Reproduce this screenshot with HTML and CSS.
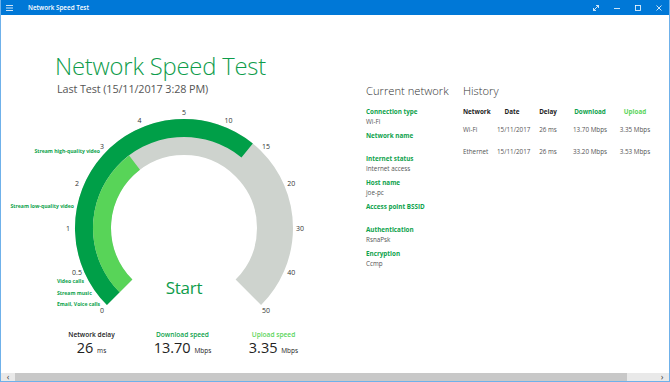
FILE: index.html
```html
<!DOCTYPE html>
<html lang="en">
<head>
    <meta charset="UTF-8">
    <title>Network Speed Test</title>
    <link rel="stylesheet" href="styles.css">
</head>
<body>
<div class="window">
    <header class="titlebar">
        <div class="title-left">
            <svg class="menu-icon" width="7" height="6" viewBox="0 0 7 6">
                <path d="M0 0.5H7M0 3H7M0 5.5H7" stroke="#cfe3f7" stroke-width="1"/>
            </svg>
            <span class="app-name">Network Speed Test</span>
        </div>
        <div class="title-buttons">
            <svg width="8" height="8" viewBox="0 0 8 8"><path d="M1.5 6.5L6.5 1.5M4 1.5H6.5V4M1.5 4V6.5H4" stroke="#fff" fill="none" stroke-width="0.8"/></svg>
            <svg width="8" height="8" viewBox="0 0 8 8"><path d="M1 4.5H7" stroke="#fff" stroke-width="0.8"/></svg>
            <svg width="8" height="8" viewBox="0 0 8 8"><rect x="1.5" y="1.5" width="5" height="5" stroke="#fff" fill="none" stroke-width="0.8"/></svg>
            <svg width="8" height="8" viewBox="0 0 8 8"><path d="M1.5 1.5L6.5 6.5M6.5 1.5L1.5 6.5" stroke="#fff" stroke-width="0.8"/></svg>
        </div>
    </header>

    <main class="content">
        <section class="test-panel">
            <h1>Network Speed Test</h1>
            <p class="last-test">Last Test (15/11/2017 3:28 PM)</p>

            <svg class="gauge" width="330" height="220" viewBox="0 0 330 220">
                <!-- track -->
                <path d="M118.65 192.35 A91 91 0 1 1 247.35 192.35" stroke="#ced3ce" stroke-width="36" fill="none"/>
                <!-- download 13.70 -->
                <path d="M112.29 198.71 A100 100 0 0 1 246.13 50.44" stroke="#009f48" stroke-width="18" fill="none"/>
                <!-- upload 3.35 -->
                <path d="M125.02 185.98 A82 82 0 0 1 133.54 62.60" stroke="#58d458" stroke-width="18" fill="none"/>

                <g class="scale">
                    <text x="101" y="210">0</text>
                    <text x="76" y="172.4">0.5</text>
                    <text x="67" y="128">1</text>
                    <text x="76" y="83.6">2</text>
                    <text x="101" y="46">3</text>
                    <text x="138.6" y="20.8">4</text>
                    <text x="183" y="12">5</text>
                    <text x="227.4" y="20.8">10</text>
                    <text x="265" y="46">15</text>
                    <text x="290.2" y="83.6">20</text>
                    <text x="299" y="128">30</text>
                    <text x="290.2" y="172.4">40</text>
                    <text x="265" y="210">50</text>
                </g>

                <g class="uses">
                    <text class="end" x="99" y="51">Stream high-quality video</text>
                    <text class="end" x="73" y="106">Stream low-quality video</text>
                    <text x="56" y="181">Video calls</text>
                    <text x="56" y="193">Stream music</text>
                    <text x="56" y="204">Email, Voice calls</text>
                </g>

                <text class="start" x="183" y="187">Start</text>
            </svg>

            <div class="stats">
                <div class="stat">
                    <div class="stat-label">Network delay</div>
                    <div class="stat-value">26 <small>ms</small></div>
                </div>
                <div class="stat">
                    <div class="stat-label download">Download speed</div>
                    <div class="stat-value">13.70 <small>Mbps</small></div>
                </div>
                <div class="stat">
                    <div class="stat-label upload">Upload speed</div>
                    <div class="stat-value">3.35 <small>Mbps</small></div>
                </div>
            </div>
        </section>

        <section class="network">
            <h2>Current network</h2>
            <dl>
                <dt>Connection type</dt><dd>Wi-Fi</dd>
                <dt>Network name</dt><dd></dd>
                <dt>Internet status</dt><dd>Internet access</dd>
                <dt>Host name</dt><dd>joe-pc</dd>
                <dt>Access point BSSID</dt><dd></dd>
                <dt>Authentication</dt><dd>RsnaPsk</dd>
                <dt>Encryption</dt><dd>Ccmp</dd>
            </dl>
        </section>

        <section class="history">
            <h2>History</h2>
            <div class="history-table">
                <div class="row head">
                    <span>Network</span><span>Date</span><span>Delay</span>
                    <span class="download">Download</span><span class="upload">Upload</span>
                </div>
                <div class="row">
                    <span>Wi-Fi</span><span>15/11/2017</span><span>26 ms</span>
                    <span>13.70 Mbps</span><span>3.35 Mbps</span>
                </div>
                <div class="row">
                    <span>Ethernet</span><span>15/11/2017</span><span>26 ms</span>
                    <span>33.20 Mbps</span><span>3.53 Mbps</span>
                </div>
            </div>
        </section>
    </main>

    <div class="hscroll">
        <span class="arrow">&#8249;</span>
        <div class="track"><div class="thumb"></div></div>
        <span class="arrow">&#8250;</span>
    </div>
</div>
</body>
</html>
```

FILE: styles.css
```css
* {
    margin: 0;
    padding: 0;
    box-sizing: border-box;
    font-family: "Open Sans", "Noto Sans", sans-serif;
}

body {
    background: #fff;
    color: #333;
}

.window {
    width: 670px;
    height: 382px;
    display: flex;
    flex-direction: column;
    border-left: 1px solid #6fb1ea;
    border-right: 1px solid #6fb1ea;
    border-bottom: 1px solid #6fb1ea;
    overflow: hidden;
}

.titlebar {
    height: 15px;
    background-color: #0078d7;
    color: white;
    display: flex;
    justify-content: space-between;
    align-items: center;
}

.title-left {
    display: flex;
    align-items: center;
}

.menu-icon {
    margin-left: 5px;
}

.app-name {
    margin-left: 15px;
    font-size: 6.3px;
    font-weight: 600;
}

.title-buttons {
    display: flex;
    gap: 13px;
    margin-right: 6px;
}

.content {
    flex: 1;
    display: flex;
}

/* left side: gauge */
.test-panel {
    width: 330px;
    flex-shrink: 0;
}

.test-panel h1 {
    margin: 37px 0 0 54px;
    font-size: 23.8px;
    font-weight: 300;
    line-height: 28px;
    color: #0e9c4b;
    letter-spacing: -0.2px;
}

.last-test {
    margin: 2px 0 0 56px;
    font-size: 10.8px;
    line-height: 14px;
    color: #555;
    letter-spacing: -0.1px;
}

.gauge {
    display: block;
    margin-top: 4px;
}

.scale text {
    font-size: 7px;
    fill: #333;
    text-anchor: middle;
    dominant-baseline: central;
}

.uses text {
    font-size: 5.1px;
    font-weight: 700;
    fill: #0ea24c;
    dominant-baseline: central;
}

.uses text.end {
    text-anchor: end;
}

.start {
    font-size: 17px;
    fill: #0e9c4b;
    text-anchor: middle;
    dominant-baseline: central;
    letter-spacing: -0.3px;
}

.stats {
    display: flex;
    padding-left: 45px;
    margin-top: 10px;
}

.stat {
    width: 91px;
    text-align: center;
}

.stat-label {
    font-size: 6.6px;
    font-weight: 600;
    color: #222;
    line-height: 10px;
}

.stat-value {
    font-size: 14.5px;
    line-height: 16px;
    color: #222;
}

.stat-value small {
    font-size: 6.5px;
}

.download {
    color: #0ea24c !important;
}

.upload {
    color: #5ad55a !important;
}

/* right side */
.network {
    width: 97px;
    margin-left: 35px;
    flex-shrink: 0;
}

.network h2,
.history h2 {
    margin-top: 68px;
    font-size: 11.2px;
    font-weight: 300;
    line-height: 16px;
    color: #333;
}

.network dl {
    margin-top: 8px;
}

.network dt {
    font-size: 6.3px;
    font-weight: 700;
    color: #0ea24c;
    line-height: 9.5px;
}

.network dd {
    font-size: 6.3px;
    color: #555;
    line-height: 9.5px;
    height: 9.5px;
    margin-bottom: 4.7px;
}

.history {
    flex: 1;
}

.history-table {
    margin-top: 8px;
}

.history-table .row {
    display: grid;
    grid-template-columns: 34px 30px 42px 42px 48px;
    font-size: 6.3px;
    line-height: 9.5px;
    color: #555;
    margin-bottom: 12.5px;
}

.history-table .row.head {
    font-weight: 700;
    color: #222;
    margin-bottom: 8.5px;
}

.history-table .row span {
    text-align: center;
    white-space: nowrap;
}

.history-table .row span:first-child {
    text-align: left;
}

/* bottom scroll bar */
.hscroll {
    height: 8px;
    display: flex;
    align-items: center;
    background: #e9e9e9;
}

.hscroll .arrow {
    width: 14px;
    font-size: 9px;
    line-height: 8px;
    text-align: center;
    color: #444;
}

.hscroll .track {
    flex: 1;
    height: 8px;
}

.hscroll .thumb {
    width: 612px;
    height: 8px;
    background: #c8c8c8;
}
```
